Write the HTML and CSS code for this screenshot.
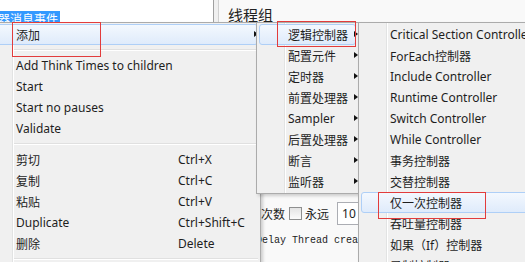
FILE: index.html
```html
<!DOCTYPE html>
<html lang="zh-CN">
<head>
    <meta charset="UTF-8">
    <title>线程组 - 右键菜单</title>
    <link rel="stylesheet" href="styles.css">
</head>
<body>
    <div class="window">
        <div class="tree">
            <span class="tree-item selected">器消息事件</span>
        </div>
        <div class="splitter"></div>
        <div class="panel">
            <div class="panel-title">线程组</div>
            <div class="loop-row">
                <span>循环次数</span>
                <span class="checkbox"></span>
                <span>永远</span>
                <span class="num-input">10</span>
            </div>
            <div class="delay-row">Delay Thread creation until needed</div>
        </div>
    </div>

    <!-- main popup -->
    <div class="menu menu-main">
        <div class="item active"><span class="label">添加</span><span class="arrow"></span></div>
        <div class="sep"></div>
        <div class="item"><span class="label">Add Think Times to children</span></div>
        <div class="item"><span class="label">Start</span></div>
        <div class="item"><span class="label">Start no pauses</span></div>
        <div class="item"><span class="label">Validate</span></div>
        <div class="sep"></div>
        <div class="item"><span class="label">剪切</span><span class="key">Ctrl+X</span></div>
        <div class="item"><span class="label">复制</span><span class="key">Ctrl+C</span></div>
        <div class="item"><span class="label">粘贴</span><span class="key">Ctrl+V</span></div>
        <div class="item"><span class="label">Duplicate</span><span class="key">Ctrl+Shift+C</span></div>
        <div class="item"><span class="label">删除</span><span class="key">Delete</span></div>
        <div class="sep"></div>
    </div>

    <!-- 添加 submenu -->
    <div class="menu menu-add">
        <div class="item active"><span class="label">逻辑控制器</span><span class="arrow"></span></div>
        <div class="item"><span class="label">配置元件</span><span class="arrow"></span></div>
        <div class="item"><span class="label">定时器</span><span class="arrow"></span></div>
        <div class="item"><span class="label">前置处理器</span><span class="arrow"></span></div>
        <div class="item"><span class="label">Sampler</span><span class="arrow"></span></div>
        <div class="item"><span class="label">后置处理器</span><span class="arrow"></span></div>
        <div class="item"><span class="label">断言</span><span class="arrow"></span></div>
        <div class="item"><span class="label">监听器</span><span class="arrow"></span></div>
    </div>

    <!-- 逻辑控制器 submenu -->
    <div class="menu menu-logic">
        <div class="item"><span class="label">Critical Section Controller</span></div>
        <div class="item"><span class="label">ForEach控制器</span></div>
        <div class="item"><span class="label">Include Controller</span></div>
        <div class="item"><span class="label">Runtime Controller</span></div>
        <div class="item"><span class="label">Switch Controller</span></div>
        <div class="item"><span class="label">While Controller</span></div>
        <div class="item"><span class="label">事务控制器</span></div>
        <div class="item"><span class="label">交替控制器</span></div>
        <div class="item active"><span class="label">仅一次控制器</span></div>
        <div class="item"><span class="label">吞吐量控制器</span></div>
        <div class="item"><span class="label">如果（If）控制器</span></div>
        <div class="item"><span class="label">录制控制器</span></div>
    </div>

    <!-- red annotation boxes -->
    <div class="mark mark-add"></div>
    <div class="mark mark-logic"></div>
    <div class="mark mark-once"></div>
</body>
</html>
```

FILE: styles.css
```css
body {
    margin: 0;
    width: 525px;
    height: 262px;
    overflow: hidden;
    position: relative;
    font-family: "Noto Sans", "Noto Sans CJK SC", sans-serif;
    font-size: 12px;
    color: #1e1e1e;
    background: #fff;
}
.window {
    display: flex;
    height: 262px;
}
.tree {
    width: 213px;
    background: #fff;
    padding-top: 11px;
    box-sizing: border-box;
}
.tree-item {
    display: inline-block;
    line-height: 17px;
    padding: 0 2px 0 0;
    margin-left: -2px;
}
.tree-item.selected {
    background: #3399ff;
    color: #fff;
}
.splitter {
    width: 6px;
    background: #f0f0f0;
    border-left: 1px solid #a0a0a0;
    border-right: 1px solid #d0d0d0;
    box-sizing: border-box;
}
.panel {
    flex: 1;
    background: #f9f9f9;
    padding-left: 9px;
    overflow: hidden;
}
.panel-title {
    font-family: "Noto Sans CJK SC", sans-serif;
    font-size: 15px;
    line-height: 20px;
    padding-top: 5px;
    color: #222;
}
.loop-row {
    display: flex;
    align-items: center;
    height: 23px;
    margin-top: 177px;
    margin-left: 9px;
}
.checkbox {
    width: 13px;
    height: 13px;
    margin: 0 3px 0 4px;
    border: 1px solid #8e8f8f;
    box-sizing: border-box;
    background: linear-gradient(#e4e4e4, #fbfbfb);
}
.num-input {
    margin-left: 8px;
    width: 60px;
    height: 23px;
    line-height: 21px;
    padding-left: 4px;
    border: 1px solid #abadb3;
    box-sizing: border-box;
    background: #fff;
}
.delay-row {
    margin-top: 6px;
    margin-left: 28px;
    font-family: "Liberation Mono", monospace;
    font-size: 10px;
    line-height: 20px;
    color: #222;
    white-space: nowrap;
}

/* popup menus */
.menu {
    position: absolute;
    top: 22px;
    box-sizing: border-box;
    padding: 1px 0;
    border: 1px solid #ababab;
    background: linear-gradient(to right, #f0f0f0 27px, #e2e3e3 27px, #e2e3e3 28px, #fff 28px, #fff 29px, #f0f0f0 29px);
    box-shadow: 2px 2px 3px rgba(0, 0, 0, 0.18);
}
.menu-main {
    left: -16px;
    width: 277px;
    z-index: 1;
}
.menu-add {
    left: 256px;
    width: 103px;
    z-index: 2;
}
.menu-logic {
    left: 358px;
    width: 200px;
    z-index: 3;
}
.item {
    position: relative;
    display: flex;
    align-items: center;
    height: 21px;
    margin: 0 2px;
    padding-left: 28px;
    border: 1px solid transparent;
    box-sizing: border-box;
    white-space: nowrap;
}
.item.active {
    border-color: #aecff7;
    border-radius: 3px;
    background: linear-gradient(#f3f8fe, #dfebfb);
}
.menu-main .label {
    width: 162px;
}
.arrow {
    position: absolute;
    right: -1px;
    top: 6px;
    width: 0;
    height: 0;
    border-top: 3px solid transparent;
    border-bottom: 3px solid transparent;
    border-left: 4px solid #111;
}
.menu-add .arrow {
    right: -3px;
}
.sep {
    height: 1px;
    margin: 4px 2px 4px 29px;
    background: #e0e0e0;
    border-bottom: 1px solid #fff;
}

/* annotation rectangles */
.mark {
    position: absolute;
    border: 1px solid #e23c3c;
    z-index: 5;
}
.mark-add {
    left: 12px;
    top: 22px;
    width: 87px;
    height: 33px;
}
.mark-logic {
    left: 277px;
    top: 21px;
    width: 77px;
    height: 24px;
}
.mark-once {
    left: 378px;
    top: 192px;
    width: 106px;
    height: 25px;
}
```
